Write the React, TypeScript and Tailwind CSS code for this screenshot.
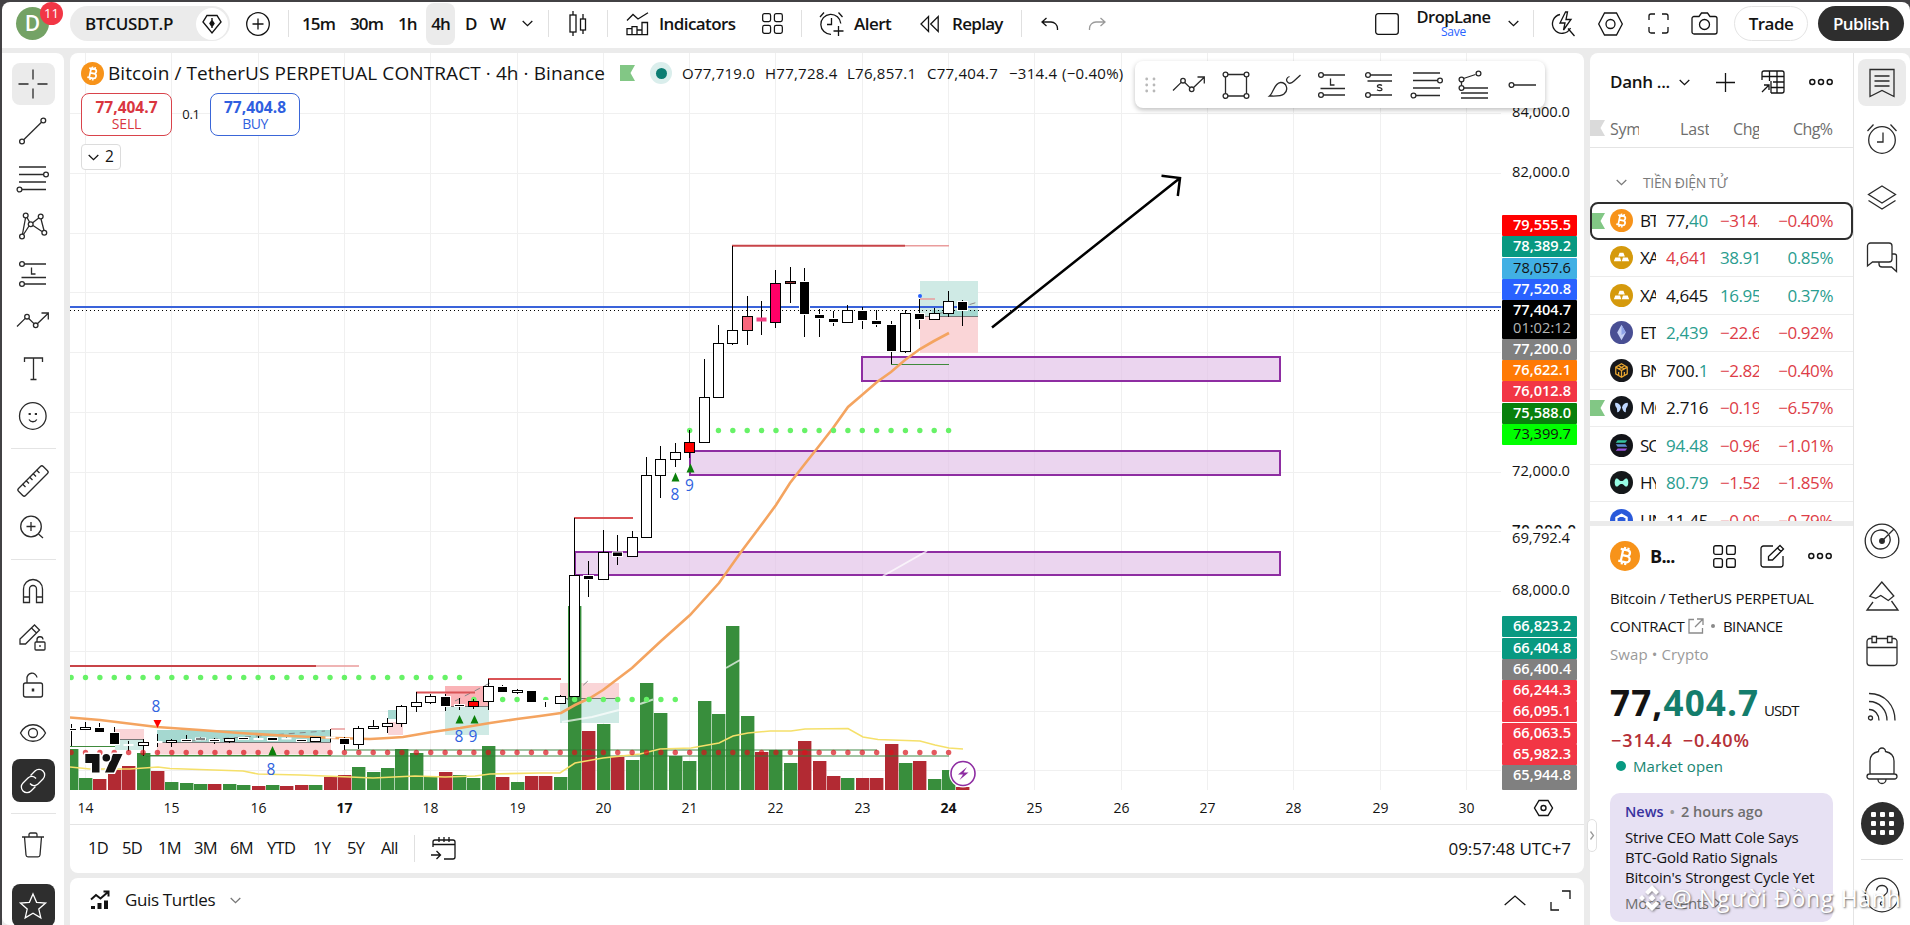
import type { ReactNode } from 'react';

type IconProps = { w?: number; h?: number; vb?: string; sw?: number; className?: string; children: ReactNode };

const Icon = ({ w = 32, h = 32, vb, sw = 1.3, className = '', children }: IconProps) => (
  <svg
    width={w}
    height={h}
    viewBox={vb ?? `0 0 ${w} ${h}`}
    fill="none"
    stroke="currentColor"
    strokeWidth={sw}
    className={`shrink-0 overflow-visible ${className}`}
  >
    {children}
  </svg>
);

const Chevron = ({ className = '' }: { className?: string }) => (
  <Icon w={11} h={7} className={className}>
    <path d="M.7 1l4.8 4.6L10.300 1" />
  </Icon>
);

const Bitcoin = ({ size }: { size: number }) => (
  <svg width={size} height={size} viewBox="0 0 32 32" className="shrink-0">
    <circle cx="16" cy="16" r="16" fill="#f7931a" />
    <g transform="rotate(12 16 16)" fill="none" stroke="#fff" strokeWidth="2.400">
      <path d="M10 9.500h7.500a3 3 0 010 6.200h-4.500h5.300a3.300 3.300 0 010 6.700H10M12.700 9.500v13M14.300 6.500v3M18 6.500v3M14.300 22.500v3M18 22.500v3" />
    </g>
  </svg>
);

const Flag = ({ color, className = '' }: { color: string; className?: string }) => (
  <svg width="15" height="16" viewBox="0 0 15 16" className={`shrink-0 ${className}`}>
    <path d="M0 0h15l-4.500 8 4.500 8H0z" fill={color} />
  </svg>
);

const Divider = ({ className = '' }: { className?: string }) => (
  <div className={`h-[27px] w-px shrink-0 bg-[#e0e0e0] ${className}`} />
);

const GridIcon = ({ w = 21 }: { w?: number }) => (
  <Icon w={w} h={w} vb="0 0 22 22">
    <rect x=".7" y=".7" width="8.300" height="8.300" rx="1.800" />
    <rect x="13" y=".7" width="8.300" height="8.300" rx="1.800" />
    <rect x=".7" y="13" width="8.300" height="8.300" rx="1.800" />
    <rect x="13" y="13" width="8.300" height="8.300" rx="1.800" />
  </Icon>
);

const Dots = () => (
  <Icon w={24} h={8} sw={1.5}>
    <circle cx="3.300" cy="4" r="2.500" />
    <circle cx="12" cy="4" r="2.500" />
    <circle cx="20.700" cy="4" r="2.500" />
  </Icon>
);

const Header = () => (
  <header className="flex h-[46px] shrink-0 items-center rounded-t-lg bg-white pb-[3px] text-[17px] font-semibold text-[#131313]">
    <div className="relative ml-[14px] flex size-[33px] shrink-0 items-center justify-center rounded-full bg-[#74a265] text-[21px] text-white">
      D
      <span className="absolute -top-[5px] left-[24px] flex size-[23px] items-center justify-center rounded-full bg-[#f23645] text-[13px] font-normal">11</span>
    </div>
    <div className="ml-[21px] flex h-[35px] w-[160px] shrink-0 items-center justify-between rounded-full bg-[#ebebeb] pr-[2px] pl-[15px]">
      <span className="text-[17px] tracking-[-0.300px]">BTCUSDT.P</span>
      <span className="flex size-[32px] items-center justify-center rounded-full bg-white">
        <Icon w={20} h={20} sw={1.4}>
          <path d="M5 1.500h10l4 6.500-9 11L1 8z" />
          <path d="M10 4v10M8 9.500l2-3 2 3-2 3z" fill="currentColor" />
        </Icon>
      </span>
    </div>
    <Icon w={24} h={24} className="ml-[16px]">
      <circle cx="12" cy="12" r="11.300" />
      <path d="M12 6.500v11M6.500 12h11" />
    </Icon>
    <Divider className="ml-[18px]" />
    <div className="ml-[13px] flex shrink-0 items-center whitespace-nowrap tracking-[-0.900px]">
      <span className="w-[32px]">15m</span>
      <span className="ml-[16px] w-[32px]">30m</span>
      <span className="ml-[16px] w-[18px]">1h</span>
      <span className="ml-[10px] flex h-[42px] w-[29px] items-center justify-center rounded-lg bg-[#ebebeb]">4h</span>
      <span className="ml-[10px] w-[10px]">D</span>
      <span className="ml-[15px] w-[16px]">W</span>
      <Chevron className="ml-[16px]" />
    </div>
    <Divider className="ml-[15px]" />
    <Icon w={18} h={26} className="ml-[20px]">
      <path d="M4 0v4M4 21v4M14 3v5M14 19v4" />
      <rect x="1" y="4" width="6" height="17" />
      <rect x="11.500" y="8" width="5" height="11" />
    </Icon>
    <Divider className="ml-[20px]" />
    <Icon w={23} h={24} className="ml-[18px]">
      <path d="M1 8.500l6-6 5 4.500 10-6.300M1 22.700v-6h5v6zM6 22.700v-8h5v8M11 18h5v4.700M16 22.700V10.500h5.500v12.200zM1 22.700h20.500" />
    </Icon>
    <span className="ml-[10px] w-[77px] tracking-[-0.600px] whitespace-nowrap">Indicators</span>
    <span className="ml-[26px]"><GridIcon /></span>
    <Divider className="ml-[18px]" />
    <Icon w={26} h={26} className="ml-[17px]">
      <path d="M12 23.300A10 10 0 1121.800 12.500M12.500 7v6.500H8M1 6l4-4.500M19.500 1.500l4 4.500M19.500 15v10M14.500 20h10" />
    </Icon>
    <span className="ml-[9px] w-[38px] tracking-[-0.500px]">Alert</span>
    <Icon w={19} h={18} className="ml-[28px]">
      <path d="M8.500 1.500v15L1 9zM18.200 1.500v15L10.700 9z" />
    </Icon>
    <span className="ml-[13px] w-[51px] tracking-[-0.700px]">Replay</span>
    <Divider className="ml-[18px]" />
    <Icon w={18} h={14} className="ml-[19px]">
      <path d="M5.500 1L1 5l4.500 4M1 5h9a6.500 6.500 0 016.500 6.500V13" />
    </Icon>
    <Icon w={18} h={14} className="ml-[29px] text-[#9a9a9a]">
      <path d="M12.500 1L17 5l-4.500 4M17 5H8a6.500 6.500 0 00-6.500 6.500V13" />
    </Icon>
    <div className="mr-[6px] ml-auto flex items-center">
      <Icon w={24} h={22}>
        <rect x=".7" y=".7" width="22.600" height="20.600" rx="2.500" />
      </Icon>
      <div className="ml-[18px] flex w-[73px] flex-col items-center leading-none tracking-[-0.500px] whitespace-nowrap">
        <span className="text-[16.500px]">DropLane</span>
        <span className="mt-px text-[12px] font-normal tracking-[-0.200px] text-[#2962ff]">Save</span>
      </div>
      <Chevron className="ml-[18px]" />
      <Divider className="ml-[14px]" />
      <Icon w={24} h={26} className="ml-[18px]">
        <path d="M8 3.500A9.500 9.500 0 1018.500 17M16 17.500l6.500 7.500M13.500 1L8 12h5l-1.500 7L19 8.500h-5L15.500 1z" />
      </Icon>
      <Icon w={25} h={24} className="ml-[22px]">
        <path d="M6.500 1h12l5.800 11-5.800 11h-12L.7 12z" />
        <circle cx="12.500" cy="12" r="4.500" />
      </Icon>
      <Icon w={21} h={21} className="ml-[25px]">
        <path d="M1 7V3a2 2 0 012-2h4M14 1h4a2 2 0 012 2v4M20 14v4a2 2 0 01-2 2h-4M7 20H3a2 2 0 01-2-2v-4" />
      </Icon>
      <Icon w={27} h={23} className="ml-[22px]">
        <path d="M3 4.500h5l2.500-3.500h6L19 4.500h5a2 2 0 012 2V20a2 2 0 01-2 2H3a2 2 0 01-2-2V6.500a2 2 0 012-2z" />
        <circle cx="13.500" cy="12.500" r="5" />
      </Icon>
      <span className="ml-[16px] flex h-[35px] w-[74px] items-center justify-center rounded-full border border-[#e4e4e4] tracking-[-0.500px]">Trade</span>
      <span className="ml-[10px] flex h-[35px] w-[86px] items-center justify-center rounded-full bg-[#2e2e2e] tracking-[-0.600px] text-white">Publish</span>
    </div>
  </header>
);

const ZigZag = () => (
  <Icon>
    <path d="M0 21.500l8.500-8.400M11.500 13.300l5.700 5.600M20.300 18.800L31 8.500M24.500 8H31.300v6.500" />
    <circle cx="10" cy="11.700" r="2.300" />
    <circle cx="18.700" cy="20.300" r="2.300" />
  </Icon>
);

const Fib = () => (
  <Icon>
    <path d="M2 4h27M2 11.500h24.500M2 19h27M5 26.500h24" />
    <circle cx="29" cy="11.500" r="2.400" />
    <circle cx="2.500" cy="26.500" r="2.400" />
  </Icon>
);

const Position = ({ short = false }: { short?: boolean }) => (
  <Icon>
    <path d={short ? 'M7.500 6H29M4.500 12H29M7.500 26H29' : 'M7.500 6H29M4.500 19.500H29M7.500 26H29'} />
    <circle cx="5" cy="6" r="2.400" />
    <circle cx="5" cy="26" r="2.400" />
    {short ? <path d="M19 16.500c-2-1.500-5-.5-4.500 1s4.500 1 4.500 2.700-3 2-5 .5" /> : <path d="M14.500 9.500v6.500h4" />}
  </Icon>
);

const Lock = () => (
  <>
    <rect x="6.500" y="13" width="19" height="14" rx="2" />
    <path d="M10 13V9a5 5 0 0110-1.500" />
    <path d="M16 18.500v3" strokeWidth="2.500" />
  </>
);

const cell = 'flex h-[47.5px] shrink-0 items-center justify-center';

const LeftToolbar = () => (
  <aside className="flex w-[62px] shrink-0 flex-col overflow-hidden rounded-tr-lg rounded-bl-lg bg-white pt-[7px] text-[#2a2a2a]">
    <div className={cell}>
      <span className="flex h-[42px] w-[43px] items-center justify-center rounded-lg bg-[#ebebeb]">
        <Icon><path d="M16 1.500v10M16 20.500v10M1.500 16h10M20.500 16h10" /></Icon>
      </span>
    </div>
    <div className={cell}>
      <Icon>
        <path d="M6.700 24.800L24.500 7.300" />
        <circle cx="26.300" cy="5.500" r="2.400" />
        <circle cx="5" cy="26.500" r="2.400" />
      </Icon>
    </div>
    <div className={cell}><Fib /></div>
    <div className={cell}>
      <Icon>
        <path d="M8.500 8L5.500 24M10 7.500l2.500 4.500M15.700 12.800l6-4.800M24 9l3 11.500M16 15.500l9 6M12 16l-5.500 8.500" />
        {[[8.7, 5.5], [23.7, 6.5], [13.7, 14.2], [5, 26.5], [27.3, 22.8]].map(([x, y]) => (
          <circle key={x} cx={x} cy={y} r="2.400" />
        ))}
      </Icon>
    </div>
    <div className={cell}><Position /></div>
    <div className={cell}><ZigZag /></div>
    <div className={cell}>
      <Icon><path d="M7.500 9V5h18v4M16.500 5v21.500M13.500 26.500h6" /></Icon>
    </div>
    <div className={cell}>
      <Icon>
        <circle cx="15.800" cy="16" r="13.300" />
        <path d="M12 19.500c1.800 3 6 3 7.800 0" />
        <path d="M12.700 13v2M18.900 13v2" strokeWidth="2.200" />
      </Icon>
    </div>
    <div className="mx-auto my-[8px] h-px w-[45px] shrink-0 bg-[#e4e4e4]" />
    <div className={cell}>
      <Icon>
        <rect x="-1.500" y="11" width="35" height="10" rx="2" transform="rotate(-45 16 16)" />
        <path d="M5.500 19l3 3M9 15.500l3 3M12.500 12l3 3M16 8.500l3 3M19.500 5l3 3" />
      </Icon>
    </div>
    <div className={cell}>
      <Icon>
        <circle cx="14" cy="14.500" r="10.300" />
        <path d="M14 10v9M9.500 14.500h9M21.500 22l4.500 4" />
      </Icon>
    </div>
    <div className="mx-auto my-[7px] h-px w-[45px] shrink-0 bg-[#e4e4e4]" />
    <div className={cell}>
      <Icon>
        <path d="M6.500 27.500V14a9.500 9.500 0 0119 0v13.500h-6V14a3.500 3.500 0 00-7 0v13.500zM6.500 22h6M19.500 22h6" />
      </Icon>
    </div>
    <div className={cell}>
      <Icon>
        <path d="M3 22v-5L17.500 3l5 5L8.500 22zM14.500 6l5 5" />
        <rect x="18" y="20" width="10" height="8" rx="1" />
        <path d="M20 20v-2a3 3 0 016-.5M23 23v2" />
      </Icon>
    </div>
    <div className={cell}><Icon><Lock /></Icon></div>
    <div className={cell}>
      <Icon>
        <path d="M3.500 16C9 5 23 5 28.500 16 23 27 9 27 3.500 16z" />
        <circle cx="16" cy="16" r="4.500" />
      </Icon>
    </div>
    <div className={cell}>
      <span className="flex h-[43px] w-[43px] items-center justify-center rounded-lg bg-[#2e2e2e] text-white">
        <Icon>
          <path d="M13.500 10.500L18 6a5.500 5.500 0 018 8l-5 5c-2.500 2.300-6 2-8-.5M18.500 21.500L14 26a5.500 5.500 0 01-8-8l5-5c2.500-2.300 6-2 8 .5" />
        </Icon>
      </span>
    </div>
    <div className="mx-auto my-[8px] h-px w-[45px] shrink-0 bg-[#e4e4e4]" />
    <div className={cell}>
      <Icon>
        <path d="M5 8h22M12 8V5.500a1.500 1.500 0 011.500-1.500h5A1.500 1.500 0 0120 5.500V8M7.500 8l1.500 18a2 2 0 002 1.800h10a2 2 0 002-1.800L24.500 8" />
      </Icon>
    </div>
    <div className="mx-auto mt-[15px] flex h-[43px] w-[43px] shrink-0 items-center justify-center rounded-lg bg-[#2e2e2e] text-white">
      <Icon>
        <path d="M16 4l3.600 8.300 9 .8-6.800 6 2 8.800L16 23.300 8.200 27.900l2-8.800-6.800-6 9-.8z" />
      </Icon>
    </div>
  </aside>
);

// candle slot -> x
const cx = (i: number) => 85.5 + 14.385 * i;

// [slot, body top, body bottom, high, low, kind]
type Kind = 'up' | 'down' | 'flat' | string;
const candles: [number, number, number, number, number, Kind][] = [
  [-1, 729, 730, 724, 746, 'down'], [0, 727.5, 729.5, 722, 730, 'up'], [1, 728, 732, 723, 732, 'down'],
  [2, 733, 744, 727, 744, 'down'], [3, 744, 746, 741, 751, 'flat'], [4, 742.5, 745.5, 739, 756, 'up'],
  [5, 741, 743, 734, 747, 'flat'], [6, 740.5, 742.5, 739, 747, 'up'], [7, 740, 741, 735, 742, 'down'],
  [8, 738.5, 739.5, 737, 740, 'down'], [9, 740, 741, 738, 744, 'down'], [10, 738.5, 741.5, 738, 743, 'up'],
  [11, 738, 739, 737.5, 740, 'down'], [12, 738, 740, 736, 738, 'flat'], [13, 738, 740, 737, 741, 'down'],
  [14, 737.5, 739.5, 737, 739, 'flat'], [15, 740, 741, 739, 742, 'down'], [16, 737.5, 741.5, 737, 742, 'up'],
  [17, 736.5, 738.5, 729, 742, 'flat'], [18, 739, 744, 737, 750, 'down'], [19, 728.5, 744.5, 726, 749, 'up'],
  [20, 726.5, 728.5, 720, 729, 'up'], [21, 723.5, 726.5, 718, 733, 'up'], [22, 706.5, 723.5, 705, 727, 'up'],
  [23, 702.5, 706.5, 692, 712, 'up'], [24, 696.5, 702.5, 694, 704, 'up'], [25, 697, 706, 694, 711, 'down'],
  [26, 705, 706, 698, 710, 'down'], [27, 701.5, 706.5, 699, 709, '#ff0000'], [28, 686.5, 701.5, 679, 710, 'up'],
  [29, 687, 692, 685, 692, 'down'], [30, 690.5, 692.5, 689, 694, 'up'], [31, 691, 702, 691, 702, 'down'],
  [32, 700, 702, 702, 707, 'flat'], [33, 696.5, 703.5, 695, 704, 'up'], [34, 575.5, 696.5, 518, 697, 'up'],
  [35, 576, 579, 561, 597, 'down'], [36, 552.5, 579.5, 530, 580, 'up'], [37, 552.5, 556, 535, 565, 'down'],
  [38, 537.5, 556.5, 531, 557, 'up'], [39, 475.5, 537.5, 457, 538, 'up'], [40, 459.5, 475.5, 446, 498, 'up'],
  [41, 452.5, 459.5, 443, 467, 'up'], [42, 442.5, 452.5, 430, 458, '#ff0000'], [43, 397.5, 442.5, 359, 443, 'up'],
  [44, 343.5, 397.5, 325, 398, 'up'], [45, 330.5, 343.5, 246, 345, 'up'], [46, 316.5, 330.5, 296, 345, '#f8667c'],
  [47, 317.5, 321.5, 301, 335, '#f43f82'], [48, 283.5, 322.5, 270, 328, '#ff0066'], [49, 281.5, 283.5, 267, 303, '#8b3030'],
  [50, 282, 314, 268, 337, 'down'], [51, 315, 318, 309, 337, 'down'], [52, 319, 322, 311, 326, 'down'],
  [53, 310.5, 322.5, 305, 323, 'up'], [54, 311, 320, 307, 329, 'down'], [55, 321, 324, 310, 327, 'down'],
  [56, 325, 351, 321, 364, 'down'], [57, 313.5, 351.5, 310, 353, 'up'], [58, 314, 319, 299, 329, 'down'],
  [59, 313.5, 319.5, 308, 320, 'up'], [60, 301.5, 313.5, 291, 317, 'up'], [61, 302, 310, 300, 326, 'down'],
];

// volume heights, first entry is slot -1; negative = red
const volume = [
  41, 12, -11, -20, -24, 37, -19, 8, 7, 6, -6, 6, 5, -4, 5, -4, -5, 5, -13, -15, 23, 18, 22, 41, 37, 13, -18, 15, 12,
  44, -13, 8, -14, -14, 13, 184, -59, 66, -33, 30, 107, 77, 34, 29, 89, 76, 164, 74, -38, 40, 27, -49, -29, -14, 12,
  -12, -12, -46, 27, -29, 11, 20, -3,
];

const gridX = Array.from({ length: 17 }, (_, d) => Math.round(cx(d * 6) - 0.5) + 0.5);
const gridY = [113, 173, 233, 292, 352, 412, 472, 531, 591, 651, 711, 770];

const tags: [string, number, number, string, string][] = [
  ['79,555.5', 215, 21, '#ff0000', '#fff'], ['78,389.2', 236, 21, '#089981', '#fff'],
  ['78,057.6', 258, 21, '#41b0e4', '#131313'], ['77,520.8', 279, 21, '#2962ff', '#fff'],
  ['77,404.7', 300, 39, '#000', '#fff'], ['77,200.0', 339, 21, '#808080', '#fff'],
  ['76,622.1', 360, 21, '#ff7a05', '#fff'], ['76,012.8', 381, 21, '#f23645', '#fff'],
  ['75,588.0', 403, 21, '#08800c', '#fff'], ['73,399.7', 424, 21, '#00ff00', '#131313'],
  ['66,823.2', 616, 21, '#089981', '#fff'], ['66,404.8', 638, 21, '#089981', '#fff'],
  ['66,400.4', 659, 21, '#808080', '#fff'], ['66,244.3', 680, 21, '#f23645', '#fff'],
  ['66,095.1', 701, 21, '#f23645', '#fff'], ['66,063.5', 723, 21, '#f23645', '#fff'],
  ['65,982.3', 744, 21, '#f23645', '#fff'], ['65,944.8', 765, 25, '#808080', '#fff'],
];

const marks: [string, number, number][] = [
  ['8', 156, 712], ['8', 271, 775], ['8', 459, 742], ['9', 473, 742], ['8', 675, 500], ['9', 689.5, 491],
];

const range = (a: number, b: number) => Array.from({ length: b - a + 1 }, (_, k) => a + k);

const Candle = ({ d }: { d: (typeof candles)[number] }) => {
  const [i, top, bottom, high, low, kind] = d;
  const x = Math.round(cx(i) - 0.5) + 0.5;
  const fill = kind === 'up' || kind === 'flat' ? '#fff' : kind === 'down' ? '#000' : kind;
  const bare = kind === 'flat' || kind === '#f43f82';
  return (
    <g>
      <path d={`M${x} ${high}V${low}`} stroke="#000" />
      {kind === 'down' && <rect x={x - 5.5} y={top - 1} width="11" height={bottom - top + 2} fill="#fff" />}
      <rect
        x={x - (kind === 'down' ? 4.5 : 5)}
        y={top}
        width={kind === 'down' ? 9 : 10}
        height={bottom - top}
        fill={fill}
        stroke={bare || kind === 'down' ? 'none' : '#000'}
      />
    </g>
  );
};

const Chart = () => (
  <svg width="1514" height="771" viewBox="70 53 1514 771" className="block font-['Open_Sans',sans-serif]">
    <defs>
      <clipPath id="pane"><rect x="70" y="53" width="1431" height="737" /></clipPath>
      <clipPath id="hidden"><rect x="1505" y="524" width="79" height="4.500" /></clipPath>
    </defs>
    <g clipPath="url(#pane)" fill="none">
      <g stroke="#f0f0f0">
        {gridX.map((x) => <path key={x} d={`M${x} 53V790`} />)}
        {gridY.map((y) => <path key={y} d={`M70 ${y + 0.5}H1501`} />)}
      </g>
      <g>
        <rect x="115" y="729" width="29" height="11" fill="#fad5d7" />
        <rect x="115" y="740" width="29" height="10" fill="#cfeae5" />
        <rect x="157" y="730" width="174" height="12.500" fill="#a5d8d0" />
        <rect x="157" y="742.500" width="174" height="12" fill="#fad5d7" />
        <rect x="388" y="710" width="8" height="9" fill="#a5d8d0" />
        <rect x="388" y="722" width="15" height="13" fill="#fad5d7" />
        <rect x="445" y="686" width="44" height="20.500" fill="#fab3b7" />
        <rect x="445" y="706.500" width="44" height="28.500" fill="#cfeae5" />
        <rect x="560" y="683" width="59" height="15.500" fill="#fad5d7" />
        <rect x="560" y="698.500" width="59" height="24.500" fill="#cfeae5" />
        <rect x="920" y="281" width="58" height="36" fill="#cfeae5" />
        <rect x="932" y="310" width="46" height="6" fill="#a5d8d0" />
        <rect x="920" y="317" width="58" height="36" fill="#fad5d7" />
        <path d="M115 739.500h29M157 742.500h174M445 706.500h44M560 698.500h59M920 316.500h58" stroke="#777" />
        <path d="M190 741L325 731M455 701l35-18M567 700l22-20M938 314l40-12" stroke="#888" strokeDasharray="6 5" />
      </g>
      {volume.map((v, k) => (
        <rect
          key={k}
          x={Math.round(cx(k - 1) - 6.5)}
          y={790 - Math.abs(v)}
          width="13.400"
          height={Math.abs(v)}
          fill={v < 0 ? '#b22a33' : '#388e3c'}
        />
      ))}
      <g fill="#e1bee7" fillOpacity=".65" stroke="#8e2da2" strokeWidth="2">
        <rect x="862" y="357" width="418" height="24" />
        <rect x="690" y="451" width="590" height="24" />
        <rect x="575" y="552" width="705" height="23" />
      </g>
      <path d="M562 722l30-5 27-7M640 704l13-4.500M726 668l14-8M883 576l44-25" stroke="#fff" strokeWidth="2" strokeOpacity=".7" />
      <path d="M344 750H877M146 756H949" stroke="#2e7d32" strokeOpacity=".45" strokeWidth="2" />
      <path d="M70 746.500h45M146 755.500h185M891 364.500h58" stroke="#3f8a3c" />
      <path d="M70 666h246M732 245.800h173" stroke="#c84448" strokeWidth="2" />
      <path d="M316 666h43M905 245.800h44M920 299h15M331 729h14" stroke="#ea9c9c" strokeWidth="1.500" />
      <path d="M416 692.500h59M488 679h73M574 518h59" stroke="#da5356" strokeWidth="2" />
      <path
        d="M70 767l20 2 40 0 28-2 12 1.500 73 2.500 15 3 42 1 50 2 23 1 42-2 30 1 30-1 15-2 50-1h20l15-10 28-5 37-4 20-5 31-1 28-5 14-7 15-3 22-2h21l14-2 43-.5 15 8.500 15 2.500 42 1.500 15 4 14 3 14 1"
        stroke="#f5e06a"
        strokeWidth="1.600"
      />
      <polyline
        points="70,717.5 100,720 157,727 200,730 240,733 290,736 336,738 370,739 388,738 403,737 432,732 460,728 490,723 517,719 540,716 561,713 575,705 590,698 603,690 632,668 661,641 690,615 719,583 741,552 765,520 776,505 790,483 804,465 819,446 833,428 848,407 862,395 877,382 891,372 905,360 920,349 934,341 949,333"
        stroke="#f4a460"
        strokeWidth="2.600"
      />
      <g fill="#67f267">
        {range(-1, 26).map((i) => <circle key={i} cx={cx(i)} cy="677.500" r="2.700" />)}
        {range(27, 41).map((i) => <circle key={i} cx={cx(i)} cy="699.500" r="2.700" />)}
        {range(42, 60).filter((i) => i !== 43).map((i) => <circle key={i} cx={cx(i)} cy="430.500" r="2.700" />)}
      </g>
      <path d="M70 307H1501" stroke="#3a63da" strokeWidth="2" />
      <path d="M70 310.500H1501" stroke="#000" strokeDasharray="1 3" />
      {candles.map((d) => <Candle key={d[0]} d={d} />)}
      <g fill="#d8131b" fillOpacity=".7">
        {range(-1, 60).map((i) => <circle key={i} cx={cx(i)} cy="752.500" r="2.700" />)}
      </g>
      <circle cx="920" cy="296" r="2" fill="#2962ff" />
      <path d="M153.500 720h8l-4 8z" fill="#f00" />
      <path
        d="M272.500 746l4 9h-8zM459.500 715l4 8.500h-8zM474.500 715l4 8.500h-8zM675.500 472.500l4 9h-8zM690.500 463.500l4 9h-8z"
        fill="#0b800b"
      />
      <g fill="#2f62e0" fontSize="15.500" textAnchor="middle">
        {marks.map(([t, x, y]) => <text key={`${t}${x}`} x={x} y={y}>{t}</text>)}
      </g>
      <path d="M992 327.500L1180 178M1161.500 175.800L1180 178L1177.800 196" stroke="#000" strokeWidth="2.500" />
      <g fill="#131313" stroke="#fff" strokeWidth="3" strokeLinejoin="round" paintOrder="stroke">
        <path d="M85.300 754h14.200v18.500h-7.500v-9.500h-6.700zM113 754h9.500l-8.500 18.500h-9z" />
        <circle cx="106.300" cy="757.800" r="3.800" />
      </g>
      <circle cx="963" cy="773.500" r="14" fill="#fff" />
      <circle cx="963" cy="773.500" r="12" fill="#fff" stroke="#8e2da2" strokeWidth="1.600" />
      <path d="M967 767l-9 7.500h5l-3.500 5.500 9-7.500h-5z" fill="#8e2da2" />
    </g>

    <g fontSize="15" fill="#131313">
      {([['84,000.0', 117], ['82,000.0', 177], ['72,000.0', 476], ['69,792.4', 543], ['68,000.0', 595]] as [string, number][]).map(([t, y]) => (
        <text key={t} x="1512" y={y} textLength="58" lengthAdjust="spacingAndGlyphs">{t}</text>
      ))}
      <text x="1512" y="535" textLength="64" fontWeight="600" clipPath="url(#hidden)">70,000.0</text>
      {tags.map(([t, y, h, bg, fg]) => (
        <g key={t}>
          <rect x="1502" y={y} width="75" height={h} rx="1" fill={bg} />
          <text
            x="1513"
            y={y + 15}
            fill={fg}
            fontWeight={fg === '#fff' ? 600 : 400}
            textLength="58"
            lengthAdjust="spacingAndGlyphs"
          >
            {t}
          </text>
        </g>
      ))}
      <text x="1513" y="333" fill="#b5b5b5" textLength="58" lengthAdjust="spacingAndGlyphs">01:02:12</text>
      {gridX.map((x, d) => (
        <text key={x} x={x} y="813" textAnchor="middle" textLength="16" lengthAdjust="spacingAndGlyphs" fontWeight={d === 3 || d === 10 ? 700 : 400}>
          {14 + d}
        </text>
      ))}
    </g>
    <g fill="none" stroke="#131313" strokeWidth="1.400">
      <path d="M1539 800.500h9l4.500 7.500-4.500 7.500h-9l-4.500-7.500z" />
      <circle cx="1543.500" cy="808" r="2.500" />
    </g>
  </svg>
);

const Legend = () => (
  <div className="absolute top-[8px] left-[11px] text-[#131313]">
    <div className="flex h-[24px] items-center whitespace-nowrap">
      <Bitcoin size={23} />
      <span className="ml-[4px] w-[497px] text-[19px] font-medium tracking-[0.090px]">
        Bitcoin / TetherUS PERPETUAL CONTRACT · 4h · Binance
      </span>
      <Flag color="#82c785" className="ml-[15px]" />
      <span className="ml-[15px] flex size-[22px] items-center justify-center rounded-full bg-[#daeeec]">
        <span className="size-[11px] rounded-full bg-[#0b7d72]" />
      </span>
      <div className="ml-[10px] flex text-[15px] tracking-[0.250px]">
        <span className="w-[83px]">O77,719.0</span>
        <span className="w-[82px]">H77,728.4</span>
        <span className="w-[80px]">L76,857.1</span>
        <span className="w-[82px]">C77,404.7</span>
        <span className="w-[53px]">−314.4</span>
        <span>(−0.40%)</span>
      </div>
    </div>
    <div className="mt-[8px] flex items-center">
      <div className="flex h-[43px] w-[91px] flex-col items-center justify-center rounded-lg border border-[#d9434b] bg-white text-[#d9363f]">
        <span className="text-[15.500px] leading-[18px] font-bold">77,404.7</span>
        <span className="text-[14px] leading-[16px] tracking-[-0.200px]">SELL</span>
      </div>
      <span className="w-[38px] text-center text-[13px] tracking-[-0.300px]">0.1</span>
      <div className="flex h-[43px] w-[90px] flex-col items-center justify-center rounded-lg border border-[#3a66d8] bg-white text-[#2f5fe0]">
        <span className="text-[15.500px] leading-[18px] font-bold">77,404.8</span>
        <span className="text-[14px] leading-[16px] tracking-[-0.500px]">BUY</span>
      </div>
    </div>
    <div className="mt-[8px] flex h-[26px] w-[40px] items-center justify-center gap-[6px] rounded border border-[#dcdcdc] bg-white text-[15.500px]">
      <Chevron />2
    </div>
  </div>
);

const DrawingBar = () => (
  <div className="absolute top-[8px] left-[1065px] flex h-[47px] w-[410px] items-center rounded-lg bg-white pl-[10px] text-[#2a2a2a] shadow-[0_2px_5px_rgba(0,0,0,0.25)]">
    <svg width="12" height="18" viewBox="0 0 12 18" fill="#b8b8b8" className="mr-[8px] shrink-0">
      {[3, 9, 15].map((y) => (
        <g key={y}>
          <circle cx="1.700" cy={y} r="1.400" />
          <circle cx="9" cy={y} r="1.400" />
        </g>
      ))}
    </svg>
    {[
      <ZigZag key="zigzag" />,
      <Icon key="rect">
        <path d="M8 5.500h16M8 27h16M5.500 8v16.500M26.500 8v16.500" />
        {[[5.5, 5.5], [26.5, 5.5], [5.5, 27], [26.5, 27]].map(([x, y]) => (
          <circle key={`${x}-${y}`} cx={x} cy={y} r="2.400" />
        ))}
      </Icon>,
      <Icon key="brush">
        <path d="M1.500 27c4-3 4.500-13 11-13.500 6-.3 8.500 7.500 3.500 11.500-3 2.500-8 2-14.500 2zM21.500 7.500c-3 1-4 4-1.500 6 2.500 2 5-.5 6-1.500l6.500-6" />
      </Icon>,
      <Position key="long" />,
      <Position key="short" short />,
      <Fib key="fib" />,
      <Icon key="fan">
        <path d="M5.500 9.500l12-4M3.500 12.500v4M6 19h24M3 24h27M3 29h27" />
        <circle cx="3.500" cy="10.500" r="2.400" />
        <circle cx="20.500" cy="4.500" r="2.400" />
        <circle cx="3.500" cy="19" r="2.400" />
      </Icon>,
      <Icon key="ray">
        <path d="M8 16h22" />
        <circle cx="5.500" cy="16" r="2.400" />
      </Icon>,
    ].map((icon, k) => (
      <span key={k} className="flex w-[47.6px] shrink-0 justify-center">{icon}</span>
    ))}
  </div>
);

const ranges: [string, string][] = [
  ['1D', 'w-[34px]'], ['5D', 'w-[36px]'], ['1M', 'w-[36px]'], ['3M', 'w-[36px]'], ['6M', 'w-[37px]'],
  ['YTD', 'w-[46px]'], ['1Y', 'w-[34px]'], ['5Y', 'w-[34px]'], ['All', 'w-[33px]'],
];

const Center = () => (
  <main className="flex w-[1514px] shrink-0 flex-col gap-[5px]">
    <section className="relative h-[820px] shrink-0 overflow-hidden rounded-lg bg-white">
      <Chart />
      <Legend />
      <DrawingBar />
      <div className="flex h-[49px] items-center border-t border-[#e4e4e4] pr-[13px] pb-px pl-[18px] text-[16.500px] font-medium text-[#131313]">
        {ranges.map(([label, w]) => (
          <span key={label} className={`${w} shrink-0 tracking-[-0.700px]`}>{label}</span>
        ))}
        <Divider />
        <Icon w={25} h={24} className="ml-[16px]">
          <path d="M2 10V5a2 2 0 012-2h18a2 2 0 012 2v15a2 2 0 01-2 2h-9M2 7.500h22M8 0v5M13 0v5M18 0v5M0 18h9M5.500 14l4 4-4 4" />
        </Icon>
        <span className="ml-auto text-[17px] tracking-[-0.080px]">09:57:48 UTC+7</span>
      </div>
    </section>
    <section className="flex min-h-0 flex-1 items-center rounded-t-lg bg-white pr-[13px] pb-[3px] pl-[20px] text-[17px] font-medium text-[#131313]">
      <Icon w={20} h={20} sw={2}>
        <path d="M1 9.500l5-4.500 4.500 3.500L18 2M13.500 1.500h5v5" />
        <path d="M1 16h4v3H1zM7.500 13h4v6h-4zM14 10.500h4V19h-4z" fill="currentColor" stroke="none" />
      </Icon>
      <span className="ml-[15px] w-[92px] tracking-[-0.350px] whitespace-nowrap">Guis Turtles</span>
      <Chevron className="ml-[13px] text-[#777]" />
      <Icon w={22} h={11} className="ml-auto"><path d="M.7 10L11 1l10.300 9" /></Icon>
      <Icon w={21} h={21} className="ml-[24px]"><path d="M12 1h8v8M1 12v8h8" /></Icon>
    </section>
  </main>
);

const coinLogos: Record<string, ReactNode> = {
  gold: (
    <>
      <circle cx="12" cy="12" r="12" fill="#d59a0d" />
      <path d="M10 7h4l1.500 4h-7zM5.500 12h5l1.200 4H4zM13.500 12h5l1.500 4h-7.700z" fill="#fff" />
    </>
  ),
  eth: (
    <>
      <circle cx="12" cy="12" r="12" fill="#494f94" />
      <path d="M12 4l4.500 8L12 20l-4.500-8z" fill="#c5d0f5" />
      <path d="M12 4l4.500 8L12 14.500z" fill="#8fa3e8" />
    </>
  ),
  bnb: (
    <>
      <circle cx="12" cy="12" r="12" fill="#17181b" />
      <path d="M12 5l6 3.500v7L12 19l-6-3.500v-7zM6 8.500l6 3.500 6-3.500M12 12v7M9 7l6 3.500M15 7l-6 3.500M9 13.500v4M15 13.500v4" fill="none" stroke="#e9a62f" strokeWidth="1.300" />
    </>
  ),
  morph: (
    <>
      <circle cx="12" cy="12" r="12" fill="#14171c" />
      <path d="M5.500 7c3 0 5.500 2 6 5-1 3-2 5-4 5 0-2 0-3-.5-4.500C5.500 11 5 9 5.500 7zM18.500 7c-3 0-5.500 2-6 5 1 3 2 5 4 5 0-2 0-3 .5-4.500 1.500-1.500 2-3.500 1.500-5.500z" fill="#bfd8ff" />
    </>
  ),
  sol: (
    <>
      <circle cx="12" cy="12" r="12" fill="#121318" />
      <path d="M8 6.500h10l-2 2.600H6z" fill="#36c5a0" />
      <path d="M6 10.700h10l2 2.600H8z" fill="#5f8fd0" />
      <path d="M8 15h10l-2 2.600H6z" fill="#9a55e0" />
    </>
  ),
  hype: (
    <>
      <circle cx="12" cy="12" r="12" fill="#14181a" />
      <path d="M6 8c3-1 3 2.500 6 2.500S15 7 18 8c1.500 2 1.500 6 0 8-3 1-3-2.500-6-2.500S9 17 6 16c-1.500-2-1.500-6 0-8z" fill="#97fce4" />
    </>
  ),
  link: (
    <>
      <circle cx="12" cy="12" r="12" fill="#2a5ada" />
      <path d="M12 6l5.300 3v6L12 18l-5.300-3V9z" fill="none" stroke="#fff" strokeWidth="2.400" />
    </>
  ),
};

type Row = { sym: string; logo: string; last: string; lit: string; first?: string; chg: string; pct: string; up?: boolean; flag?: boolean };

// `first` is the unchanged part of the last price, `last` carries the tick colour in `lit`
const rows: Row[] = [
  { sym: 'BT', logo: 'btc', first: '77,', last: '40', lit: 'text-[#2a9d8f]', chg: '−314.', pct: '−0.40%', flag: true },
  { sym: 'XA', logo: 'gold', last: '4,641', lit: 'text-[#dd3d47]', chg: '38.91', pct: '0.85%', up: true },
  { sym: 'XA', logo: 'gold', last: '4,645', lit: '', chg: '16.95', pct: '0.37%', up: true },
  { sym: 'ET', logo: 'eth', last: '2,439', lit: 'text-[#2a9d8f]', chg: '−22.6', pct: '−0.92%' },
  { sym: 'BN', logo: 'bnb', first: '700.', last: '1', lit: 'text-[#2a9d8f]', chg: '−2.82', pct: '−0.40%' },
  { sym: 'MO', logo: 'morph', last: '2.716', lit: '', chg: '−0.19', pct: '−6.57%', flag: true },
  { sym: 'SO', logo: 'sol', last: '94.48', lit: 'text-[#2a9d8f]', chg: '−0.96', pct: '−1.01%' },
  { sym: 'HY', logo: 'hype', last: '80.79', lit: 'text-[#2a9d8f]', chg: '−1.52', pct: '−1.85%' },
  { sym: 'LIN', logo: 'link', last: '11.45', lit: '', chg: '−0.09', pct: '−0.79%' },
];

const WatchRow = ({ row, selected }: { row: Row; selected: boolean }) => {
  const tone = row.up ? 'text-[#2a9d8f]' : 'text-[#dd3d47]';
  return (
    <div
      className={`flex h-[37.5px] shrink-0 items-center text-[17px] font-medium whitespace-nowrap ${
        selected ? 'rounded-lg outline-2 -outline-offset-2 outline-[#2e2e2e]' : 'border-b border-[#ececec]'
      }`}
    >
      <span className="w-[20px] shrink-0">{row.flag && <Flag color="#82c785" />}</span>
      {row.logo === 'btc' ? (
        <Bitcoin size={23} />
      ) : (
        <svg width="23" height="23" viewBox="0 0 24 24" className="shrink-0">{coinLogos[row.logo]}</svg>
      )}
      <span className="ml-[7px] w-[16px] shrink-0 overflow-hidden tracking-[-1px]">{row.sym}</span>
      <span className="ml-[10px] w-[44px] shrink-0 overflow-hidden tracking-[-0.250px]">
        {row.first}
        <span className={row.lit}>{row.last}</span>
      </span>
      <span className={`ml-[10px] w-[39px] shrink-0 overflow-hidden tracking-[-0.500px] ${tone}`}>{row.chg}</span>
      <span className={`w-[74px] shrink-0 text-right tracking-[-0.450px] ${tone}`}>{row.pct}</span>
    </div>
  );
};

const Watchlist = () => (
  <section className="flex h-[468px] shrink-0 flex-col overflow-hidden rounded-tl-lg bg-white">
    <div className="flex h-[58px] shrink-0 items-center pl-[20px] text-[17px] font-semibold tracking-[-0.300px]">
      <span className="w-[60px] whitespace-nowrap">Danh ...</span>
      <Chevron className="ml-[9px]" />
      <Icon w={19} h={19} className="ml-[26px]"><path d="M9.500 0v19M0 9.500h19" /></Icon>
      <Icon w={24} h={24} className="ml-[26px]">
        <path d="M1 10V3a2 2 0 012-2h18a2 2 0 012 2v18a2 2 0 01-2 2H10M1 6.500h22M12 12h11M10 17.500h13M8.500 1v10M16 1v22M10 11v12M1 22l7-7M3 15h5v5" />
      </Icon>
      <span className="ml-[24px]"><Dots /></span>
    </div>
    <div className="flex h-[37px] shrink-0 items-center border-b border-[#e4e4e4] text-[16px] whitespace-nowrap text-[#6e6e6e]">
      <Flag color="#dadada" className="mb-[3px]" />
      <span className="ml-[5px] w-[29px] overflow-hidden tracking-[-0.300px]">Sym</span>
      <span className="ml-[41px] w-[29px] overflow-hidden tracking-[-0.100px]">Last</span>
      <span className="ml-[24px] w-[26px] overflow-hidden tracking-[-0.400px]">Chg</span>
      <span className="ml-[34px] w-[41px] tracking-[-0.600px]">Chg%</span>
    </div>
    <div className="flex h-[54px] shrink-0 items-center pt-[15px] pl-[26px] text-[14px] text-[#7a7a7a]">
      <Chevron />
      <span className="ml-[16px] tracking-[-0.350px] whitespace-nowrap">TIỀN ĐIỆN TỬ</span>
    </div>
    {rows.map((row, i) => <WatchRow key={i} row={row} selected={i === 0} />)}
  </section>
);

const Details = () => (
  <section className="min-h-0 flex-1 overflow-hidden bg-white pr-[20px] pl-[20px] text-[15px] text-[#131313]">
    <div className="mt-[15px] flex h-[30px] items-center">
      <Bitcoin size={30} />
      <span className="ml-[10px] w-[24px] text-[18px] font-bold tracking-[-0.700px]">B...</span>
      <span className="ml-[39px]"><GridIcon w={23} /></span>
      <Icon w={24} h={24} className="ml-[24px]">
        <path d="M13 2H3.500A2.500 2.500 0 001 4.500v16A2.500 2.500 0 003.500 23h17a2.500 2.500 0 002.500-2.500V12M8.500 16v-3.500L20 1.500l3.500 3.500L12.500 16zM17.500 4l3.500 3.500" />
      </Icon>
      <span className="ml-[24px]"><Dots /></span>
    </div>
    <div className="mt-[13px] leading-[28px] whitespace-nowrap">
      <div className="tracking-[-0.250px]">Bitcoin / TetherUS PERPETUAL</div>
      <div className="flex items-center">
        <span className="w-[72px] tracking-[-0.350px]">CONTRACT</span>
        <Icon w={16} h={16} className="ml-[6px] text-[#8a8a8a]"><path d="M6 1.500H1V15h13.500v-5M9 1h6v6M15 1L7 9" /></Icon>
        <span className="ml-[7px] size-[4px] rounded-full bg-[#8a8a8a]" />
        <span className="ml-[8px] tracking-[-0.600px]">BINANCE</span>
      </div>
      <div className="tracking-[0.100px] text-[#9a9a9a]">Swap • Crypto</div>
    </div>
    <div className="mt-[15px] flex items-baseline leading-[40px]">
      <span className="w-[149px] text-[35px] font-bold tracking-[1.150px] whitespace-nowrap">
        77,<span className="text-[#147d6c]">404.7</span>
      </span>
      <span className="ml-[5px] tracking-[-0.900px]">USDT</span>
    </div>
    <div className="-mt-[3px] flex gap-[10px] pl-px text-[18px] leading-[26px] font-semibold tracking-[0.900px] text-[#b53037]">
      <span>−314.4</span>
      <span>−0.40%</span>
    </div>
    <div className="flex items-center pl-[6px] leading-[26px] text-[#178572]">
      <span className="size-[10px] rounded-full bg-[#089981]" />
      <span className="ml-[7px] tracking-[0.050px]">Market open</span>
    </div>
    <div className="mt-[14px] h-[129px] rounded-[10px] bg-[#e7e1f3] px-[15px] pt-[9px] whitespace-nowrap">
      <div className="text-[14.500px] leading-[20px] font-semibold text-[#6e6e6e]">
        <span className="text-[#39339f]">News</span>
        <span className="mx-[6px] text-[#9a9a9a]">•</span>
        2 hours ago
      </div>
      <div className="mt-[5px] leading-[20px] tracking-[-0.220px]">
        Strive CEO Matt Cole Says<br />
        BTC-Gold Ratio Signals<br />
        Bitcoin's Strongest Cycle Yet
      </div>
      <div className="mt-[6px] flex items-center leading-[20px] tracking-[-0.300px] text-[#6e6e6e]">
        More events
        <Icon w={7} h={10} className="ml-[5px]"><path d="M1 1l4.500 4L1 9" /></Icon>
      </div>
    </div>
  </section>
);

const RightBar = () => (
  <nav className="flex w-[57px] shrink-0 flex-col items-center rounded-tr-lg border-l border-[#e4e4e4] bg-white pt-[6px] text-[#2a2a2a]">
    <span className="flex h-[47px] w-[48px] shrink-0 items-center justify-center rounded-lg bg-[#ebebeb]">
      <Icon w={26} h={30}>
        <path d="M1 1.500h24v27l-12-6-12 6zM5.500 8h15M5.500 13h15M5.500 18h15" />
      </Icon>
    </span>
    <Icon w={32} h={32} className="mt-[17px]">
      <circle cx="16" cy="17" r="13.300" />
      <path d="M17 9.500V19h-6M1.500 8l6-6.500M24.500 1.500l6 6.500" />
    </Icon>
    <Icon w={32} h={32} className="mt-[26px]">
      <path d="M16 5l13.500 8.500L16 22 2.500 13.500zM2.500 19.500L16 28l13.500-8.500" />
    </Icon>
    <Icon w={32} h={32} className="mt-[28px]">
      <path d="M1.500 25V5a3 3 0 013-3H23a3 3 0 013 3v13a3 3 0 01-3 3H6.500zM13 21.500v1.500a3 3 0 003 3h9.500l5 4.500V15a2 2 0 00-2-2H26" />
    </Icon>
    <Icon w={36} h={36} className="mt-[250px]">
      <circle cx="18" cy="18" r="16.800" />
      <path d="M24 10.500a9.500 9.500 0 101 1.500M18 18L30 6" />
      <circle cx="18" cy="18" r="2.300" fill="currentColor" />
    </Icon>
    <Icon w={34} h={32} className="mt-[21px]">
      <path d="M16.800 2l12 14-5.500 4.500-7.500-5-5 2.800-6-2zM8 22l-6 8h31l-6.500-9" />
    </Icon>
    <Icon w={32} h={32} className="mt-[23px]">
      <path d="M6 3.500H4a3 3 0 00-3 3v21a3 3 0 003 3h24a3 3 0 003-3v-21a3 3 0 00-3-3h-2M11 3.500h10M1 12.500h30M6 1.500h4.500v6H6zM21.500 1.500H26v6h-4.500z" />
    </Icon>
    <Icon w={30} h={30} className="mt-[25px]">
      <path d="M2 1.500c16 0 26 12 26 27M2 9.500c11 0 18 9 18 19M2 17.500c6 0 10 5 10 11" />
      <circle cx="3.500" cy="26" r="2" />
    </Icon>
    <Icon w={32} h={36} className="mt-[26px]">
      <path d="M4 26V13c0-5 3.500-8.500 8.500-9.500a3.500 3.500 0 017 0C24.500 4.500 28 8 28 13v13M3.500 26h25a2.500 2.500 0 010 5h-25a2.500 2.500 0 010-5zM12 31.500a4 4 0 008 0" />
    </Icon>
    <span className="mt-[18px] grid size-[43px] shrink-0 grid-cols-[repeat(3,5px)] place-content-center gap-[4px] rounded-full bg-[#2e2e2e]">
      {range(1, 9).map((k) => <i key={k} className="size-[5px] rounded-[1px] bg-white" />)}
    </span>
    <div className="mt-[14px] h-px w-[42px] shrink-0 bg-[#e0e0e0]" />
    <Icon w={36} h={36} className="mt-[17px]">
      <circle cx="18" cy="18" r="16.800" />
      <path d="M12.500 13.500c.5-7 11.500-6.500 11 .5-.3 4-5 3.500-5.500 8" />
      <circle cx="18" cy="26.500" r="1.600" />
    </Icon>
  </nav>
);

const App = () => (
  <div className="relative flex h-[925px] w-[1910px] flex-col overflow-hidden bg-[#424144] pt-[2px] pl-[2px] font-['Open_Sans',sans-serif] text-[#131313]">
    <Header />
    <div className="flex min-h-0 flex-1 gap-[6px] bg-[#ebebeb] pt-[5px]">
      <LeftToolbar />
      <Center />
      <div className="flex w-[320px]">
        <div className="flex w-[263px] shrink-0 flex-col gap-[5px]">
          <Watchlist />
          <Details />
        </div>
        <RightBar />
      </div>
    </div>
    <div className="absolute top-[819px] left-[1587px] flex h-[33px] w-[10px] items-center justify-center rounded-full border border-[#e0e0e0] bg-white text-[#9a9a9a]">
      <Icon w={4} h={9}><path d="M.5 .5l3 4-3 4" /></Icon>
    </div>
    <div className="absolute top-[881px] left-[1638px] flex items-center text-[23px] whitespace-nowrap text-white [text-shadow:1px_1px_2px_rgba(90,90,90,0.900)]">
      <svg width="28" height="28" viewBox="0 0 28 28" fill="#fff" className="drop-shadow-[1px_1px_1px_rgba(90,90,90,0.7)]">
        <path d="M14 1l7 7-3 3-4-4-4 4-3-3zM4 11l3 3-3 3-3-3zM24 11l3 3-3 3-3-3zM14 10.500l3.500 3.500-3.500 3.500-3.500-3.500zM7 20l3-3 4 4 4-4 3 3-7 7z" />
      </svg>
      <span className="ml-[5px] w-[234px] tracking-[0.700px]">@ Người Đồng Hành</span>
    </div>
  </div>
);

export default App;
